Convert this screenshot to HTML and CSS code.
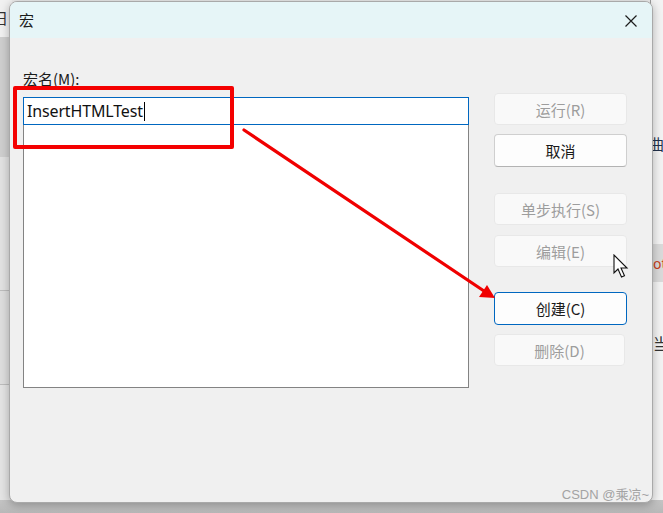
FILE: index.html
```html
<!DOCTYPE html>
<html lang="zh-CN">
<head>
<meta charset="utf-8">
<title>宏</title>
<link rel="stylesheet" href="styles.css">
</head>
<body>
<div class="desk">
  <div class="bg-left">
    <span class="bg-left-glyph">日</span>
    <div class="bg-left-panel"></div>
  </div>
  <div class="bg-right">
    <span class="bg-r1">曲</span>
    <div class="bg-band"><span class="bg-r2">ot</span></div>
    <span class="bg-r3">当</span>
  </div>
  <div class="bg-bottom"></div>

  <div class="dialog">
    <div class="titlebar">
      <span class="title">宏</span>
      <svg class="close" width="14" height="14" viewBox="0 0 14 14"><path d="M1.5 1.5 L12.5 12.5 M12.5 1.5 L1.5 12.5" stroke="#1c1c1c" stroke-width="1.2" fill="none"/></svg>
    </div>
    <div class="body">
      <div class="left">
        <div class="label">宏名(M):</div>
        <div class="input"><span class="value">InsertHTMLTest</span><span class="caret"></span></div>
        <div class="list"></div>
      </div>
      <div class="right">
        <div class="btn disabled b-run">运行(R)</div>
        <div class="btn normal b-cancel">取消</div>
        <div class="btn disabled b-step">单步执行(S)</div>
        <div class="btn disabled b-edit">编辑(E)</div>
        <div class="btn primary b-create">创建(C)</div>
        <div class="btn disabled b-del">删除(D)</div>
      </div>
    </div>
    <div class="watermark">CSDN @乘凉~</div>
  </div>

  <div class="redbox"></div>
  <svg class="arrow" width="663" height="513" viewBox="0 0 663 513">
    <line x1="244" y1="130" x2="484" y2="291" stroke="#f00000" stroke-width="3.2" stroke-linecap="round"/>
    <path d="M495 298 L479 297 L487 285 Z" fill="#f00000"/>
  </svg>
  <svg class="cursor" width="16" height="26" viewBox="0 0 16 26">
    <path d="M1 1 L1 19 L5 15 L8.5 23 L11.5 21.7 L8 14 L14 14 Z" fill="#fff" stroke="#111" stroke-width="1.1" stroke-linejoin="miter"/>
  </svg>
</div>
</body>
</html>
```
FILE: styles.css
```css
html, body {
  margin: 0;
  padding: 0;
}
body {
  width: 663px;
  height: 513px;
  overflow: hidden;
  font-family: "Noto Sans", "Noto Sans CJK SC", sans-serif;
}
.desk {
  position: relative;
  width: 663px;
  height: 513px;
  background: #ececec;
  overflow: hidden;
}
.bg-left {
  position: absolute;
  left: 0;
  top: 0;
  width: 12px;
  height: 513px;
  background: #f1f1f1;
  overflow: hidden;
}
.bg-left-glyph {
  position: absolute;
  left: -7px;
  top: 7px;
  font-family: "Noto Sans CJK SC", sans-serif;
  font-size: 15px;
  color: #333;
}
.bg-left-panel {
  position: absolute;
  left: 0;
  top: 37px;
  width: 12px;
  height: 476px;
  background: linear-gradient(#cfcfcf 0, #cfcfcf 120px, #e2e2e2 120px, #e2e2e2 253px, #bdbdbd 253px, #bdbdbd 254px, #dedede 254px, #dedede 347px, #bdbdbd 347px, #bdbdbd 348px, #e4e4e4 348px);
}
.bg-right {
  position: absolute;
  left: 650px;
  top: 0;
  width: 13px;
  height: 513px;
  background: #f3f3f3;
  border-left: 1px solid #9c9c9c;
  overflow: hidden;
}
.bg-r1 {
  position: absolute;
  left: -2px;
  top: 133px;
  font-family: "Noto Sans CJK SC", sans-serif;
  font-size: 15px;
  color: #22304a;
}
.bg-band {
  position: absolute;
  left: 0;
  top: 244px;
  width: 13px;
  height: 38px;
  background: #dadada;
}
.bg-r2 {
  position: absolute;
  left: 2px;
  top: 10px;
  font-size: 14px;
  color: #c8401a;
}
.bg-r3 {
  position: absolute;
  left: 2px;
  top: 331px;
  font-family: "Noto Sans CJK SC", sans-serif;
  font-size: 16px;
  color: #333;
}
.bg-bottom {
  position: absolute;
  left: 0;
  top: 500px;
  width: 663px;
  height: 13px;
  background: linear-gradient(#c4c4c4, #b8b8b8);
}
.dialog {
  position: absolute;
  left: 9px;
  top: 1px;
  width: 642px;
  height: 500px;
  border: 1px solid #a9a9a9;
  border-radius: 8px;
  background: #f0f0f0;
  box-shadow: 0 2px 10px rgba(0, 0, 0, 0.28);
  overflow: hidden;
  display: flex;
  flex-direction: column;
}
.titlebar {
  height: 36px;
  flex: none;
  background: #e6f5f7;
  display: flex;
  align-items: center;
  justify-content: space-between;
  padding: 0 14px 0 9px;
}
.title {
  font-family: "Noto Sans CJK SC", sans-serif;
  font-size: 15px;
  color: #1a1a1a;
  margin-top: -1px;
}
.close {
  display: block;
  margin-top: 1px;
}
.body {
  display: flex;
  padding: 0 0 0 13px;
}
.left {
  width: 446px;
  display: flex;
  flex-direction: column;
}
.label {
  font-family: "Noto Sans CJK SC", sans-serif;
  font-size: 15px;
  color: #1a1a1a;
  margin-top: 30px;
  height: 29px;
  line-height: 22px;
}
.input {
  height: 26px;
  border: 1px solid #0067c0;
  background: #fff;
  display: flex;
  align-items: center;
  padding-left: 3px;
}
.value {
  font-family: "Noto Sans", sans-serif;
  font-size: 16px;
  color: #111;
  letter-spacing: -0.15px;
}
.caret {
  width: 1px;
  height: 19px;
  background: #000;
  margin-left: 1px;
}
.list {
  height: 262px;
  border: 1px solid #838383;
  border-top: none;
  background: #fff;
}
.right {
  margin-left: 25px;
  width: 133px;
  display: flex;
  flex-direction: column;
  padding-top: 55px;
}
.btn {
  box-sizing: border-box;
  height: 32px;
  border-radius: 4px;
  display: flex;
  align-items: center;
  justify-content: center;
  font-family: "Noto Sans CJK SC", sans-serif;
  font-size: 15px;
}
.disabled {
  background: #f9f9f9;
  border: 1px solid #e8e8e8;
  color: #9d9d9d;
}
.normal {
  background: #fdfdfd;
  border: 1px solid #cfcfcf;
  border-bottom-color: #b3b3b3;
  color: #1a1a1a;
}
.primary {
  background: #fdfdfd;
  border: 1.5px solid #0067c0;
  color: #1a1a1a;
}
.b-cancel { margin-top: 9px; height: 33px; }
.b-step { margin-top: 26px; }
.b-edit { margin-top: 10px; }
.b-create { margin-top: 25px; height: 33px; }
.b-del { margin-top: 9px; width: 131px; }
.watermark {
  position: absolute;
  right: 3px;
  bottom: -1px;
  font-family: "Liberation Sans", "Noto Sans CJK SC", sans-serif;
  font-size: 13px;
  color: #a3a3a3;
}
.redbox {
  position: absolute;
  left: 13px;
  top: 86px;
  width: 213px;
  height: 55px;
  border: 4px solid #f40000;
  border-radius: 2px;
}
.arrow {
  position: absolute;
  left: 0;
  top: 0;
}
.cursor {
  position: absolute;
  left: 613px;
  top: 254px;
}
```
